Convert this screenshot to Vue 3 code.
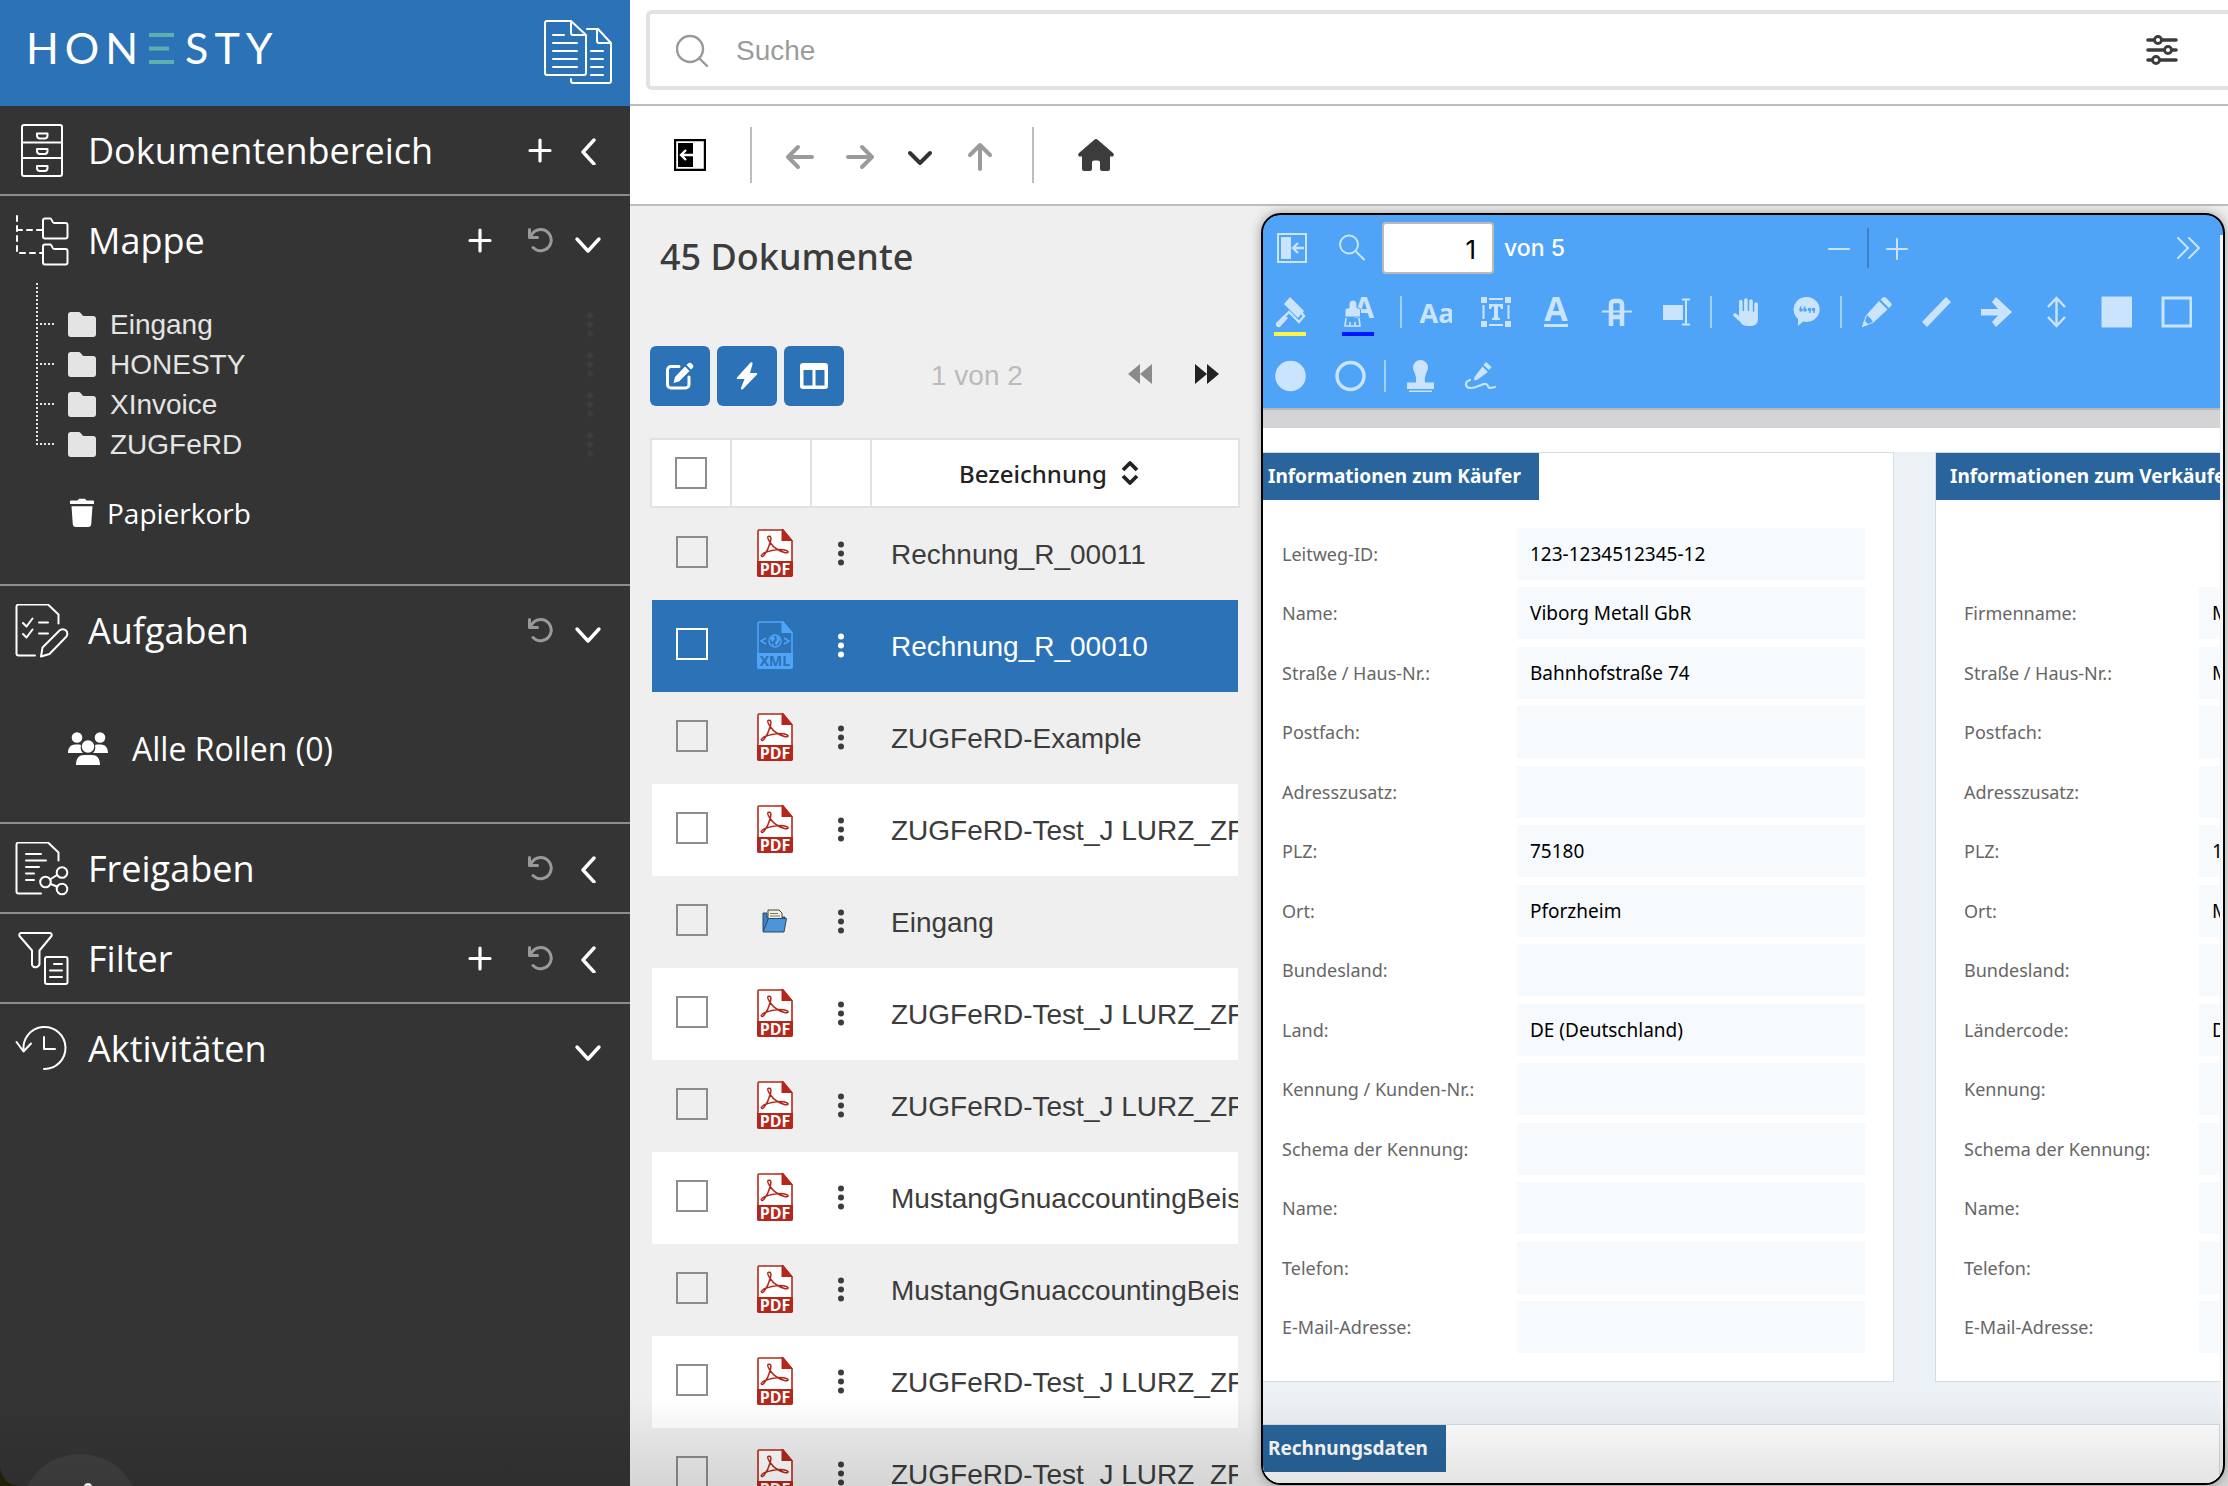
<script setup>
import { ref } from 'vue'

const folders = ['Eingang', 'HONESTY', 'XInvoice', 'ZUGFeRD']

const documents = ref([
  { name: 'Rechnung_R_00011', type: 'pdf' },
  { name: 'Rechnung_R_00010', type: 'xml', selected: true },
  { name: 'ZUGFeRD-Example', type: 'pdf' },
  { name: 'ZUGFeRD-Test_J LURZ_ZF', type: 'pdf' },
  { name: 'Eingang', type: 'folder' },
  { name: 'ZUGFeRD-Test_J LURZ_ZF', type: 'pdf' },
  { name: 'ZUGFeRD-Test_J LURZ_ZF', type: 'pdf' },
  { name: 'MustangGnuaccountingBeispiel', type: 'pdf' },
  { name: 'MustangGnuaccountingBeispiel', type: 'pdf' },
  { name: 'ZUGFeRD-Test_J LURZ_ZF', type: 'pdf' },
  { name: 'ZUGFeRD-Test_J LURZ_ZF', type: 'pdf' },
])

const buyer = [
  ['Leitweg-ID:', '123-1234512345-12'],
  ['Name:', 'Viborg Metall GbR'],
  ['Straße / Haus-Nr.:', 'Bahnhofstraße 74'],
  ['Postfach:', ''],
  ['Adresszusatz:', ''],
  ['PLZ:', '75180'],
  ['Ort:', 'Pforzheim'],
  ['Bundesland:', ''],
  ['Land:', 'DE (Deutschland)'],
  ['Kennung / Kunden-Nr.:', ''],
  ['Schema der Kennung:', ''],
  ['Name:', ''],
  ['Telefon:', ''],
  ['E-Mail-Adresse:', ''],
]

const seller = [
  ['Firmenname:', 'M'],
  ['Straße / Haus-Nr.:', 'M'],
  ['Postfach:', ''],
  ['Adresszusatz:', ''],
  ['PLZ:', '1'],
  ['Ort:', 'M'],
  ['Bundesland:', ''],
  ['Ländercode:', 'D'],
  ['Kennung:', ''],
  ['Schema der Kennung:', ''],
  ['Name:', ''],
  ['Telefon:', ''],
  ['E-Mail-Adresse:', ''],
]

const page = ref('1')
const query = ref('')
</script>

<template>
  <div class="app">
    <svg class="defs" width="0" height="0" aria-hidden="true">
      <symbol id="i-plus" viewBox="0 0 28 28"><path d="M14 3v21M4 13.500h20" fill="none" stroke="currentColor" stroke-width="3.2" stroke-linecap="round" /></symbol>
      <symbol id="i-left" viewBox="0 0 28 28"><path d="M20 3 9 15 20 27" fill="none" stroke="currentColor" stroke-width="3.400" stroke-linecap="round" stroke-linejoin="round" /></symbol>
      <symbol id="i-down" viewBox="0 0 28 28"><path d="M3 12l11 12 11-12" fill="none" stroke="currentColor" stroke-width="3.400" stroke-linecap="round" stroke-linejoin="round" /></symbol>
      <symbol id="i-undo" viewBox="0 0 28 28"><path d="M3.500 2.500v8h8M4.500 9.500C6.500 5.500 10 2.500 14.500 2.500a10.600 10.600 0 1 1-7.500 18" fill="none" stroke="currentColor" stroke-width="3" stroke-linecap="round" stroke-linejoin="round" /></symbol>
      <symbol id="i-dots" viewBox="0 0 8 28"><circle cx="4" cy="4.500" r="3" /><circle cx="4" cy="13.500" r="3" /><circle cx="4" cy="22.500" r="3" /></symbol>
      <symbol id="i-folder" viewBox="0 0 28 26"><path d="M3 0h8c2 0 3 4 5 4h9a3 3 0 0 1 3 3v15a3 3 0 0 1-3 3H3a3 3 0 0 1-3-3V3a3 3 0 0 1 3-3z" fill="currentColor" /></symbol>
    </svg>

    <aside class="sidebar">
      <header class="brand">
        <div class="logo" aria-label="HONESTY">
          <span>H</span><span>O</span><span>N</span>
          <svg class="logo-bars" width="25" height="31" viewBox="0 0 25 31"><path d="M0 0h25v4H0zM0 13.500h20v4H0zM0 27h25v4H0z" fill="#5cb0ae" /></svg>
          <span>S</span><span>T</span><span>Y</span>
        </div>
        <svg width="68" height="64" viewBox="0 0 68 64" fill="none" stroke="#fff" stroke-width="2" stroke-linecap="round" stroke-linejoin="round">
          <path d="M27 1H3a2 2 0 0 0-2 2v50a2 2 0 0 0 2 2h37a2 2 0 0 0 2-2V15zM27 1v12a2 2 0 0 0 2 2h13M9 15h11M9 23h24M9 31h24M9 39h24M9 47h24" />
          <path d="M43 9h11l13 14v38a2 2 0 0 1-2 2H29a2 2 0 0 1-2-2v-2M53 9v12a2 2 0 0 0 2 2h12M47 31h12M47 39h12M47 47h12M47 55h12" />
        </svg>
      </header>

      <nav>
        <section>
          <div class="head">
            <svg class="sec" viewBox="0 0 54 54">
              <rect x="7" y="1" width="40" height="51" rx="2" />
              <path d="M7 18.500h40M7 34h40M22 9.500h10.500v2a3 3 0 0 1-3 3h-5a3 3 0 0 1-2.500-3zM22 25h10.500v2a3 3 0 0 1-3 3h-5a3 3 0 0 1-2.500-3zM22 42h10.500v2a3 3 0 0 1-3 3h-5a3 3 0 0 1-2.500-3z" />
            </svg>
            <h2>Dokumentenbereich</h2>
            <button class="ico" aria-label="Hinzufügen"><svg><use href="#i-plus" /></svg></button>
            <button class="ico" aria-label="Aufklappen"><svg><use href="#i-left" /></svg></button>
          </div>
        </section>

        <section class="mappe">
          <div class="head">
            <svg class="sec" viewBox="0 0 54 54">
              <path d="M2 2v37h25M2 16h25" stroke-dasharray="5 5" />
              <path d="M30 4.500h5.500c1.500 0 1.500 4.500 3.500 4.500h11.500a2 2 0 0 1 2 2v11.500a2 2 0 0 1-2 2H30a2 2 0 0 1-2-2v-16a2 2 0 0 1 2-2zM30 30.500h5.500c1.500 0 1.500 4.500 3.500 4.500h11.500a2 2 0 0 1 2 2v11.500a2 2 0 0 1-2 2H30a2 2 0 0 1-2-2v-16a2 2 0 0 1 2-2z" />
            </svg>
            <h2>Mappe</h2>
            <button class="ico" aria-label="Hinzufügen"><svg><use href="#i-plus" /></svg></button>
            <button class="ico dim" aria-label="Neu laden"><svg><use href="#i-undo" /></svg></button>
            <button class="ico" aria-label="Zuklappen"><svg><use href="#i-down" /></svg></button>
          </div>
          <ul class="tree">
            <li v-for="f in folders" :key="f">
              <svg class="folder" width="28" height="26"><use href="#i-folder" /></svg>
              <a href="#">{{ f }}</a>
              <svg class="ghost" width="8" height="28"><use href="#i-dots" /></svg>
            </li>
          </ul>
          <a class="trash" href="#">
            <svg width="26" height="30" viewBox="0 0 26 30" fill="#fff"><path d="M2 2.500h6.500L10 .8h6l1.500 1.700H24a1 1 0 0 1 1 1V6H1V3.500a1 1 0 0 1 1-1zM2.500 8.300h21l-1.300 18.200a3 3 0 0 1-3 2.500H6.800a3 3 0 0 1-3-2.500z" /></svg>
            <span>Papierkorb</span>
          </a>
        </section>

        <section class="tasks">
          <div class="head">
            <svg class="sec" viewBox="0 0 54 54">
              <path d="M20 51.500H3.500a2 2 0 0 1-2-2v-47a2 2 0 0 1 2-2h29.500l10.500 10v9M8 19l3.500 3.500 6-8M8 30l3.500 3.500 6-8M24 18.500h9M24 29.500h9" />
              <path d="M26 52.500l1.500-9 17-17a4.300 4.300 0 0 1 6.500 6.500l-16.500 17z" />
            </svg>
            <h2>Aufgaben</h2>
            <button class="ico dim" aria-label="Neu laden"><svg><use href="#i-undo" /></svg></button>
            <button class="ico" aria-label="Zuklappen"><svg><use href="#i-down" /></svg></button>
          </div>
          <a class="roles" href="#">
            <svg width="40" height="34" viewBox="0 0 40 34" fill="#fff"><circle cx="9" cy="5.500" r="5.300" /><circle cx="32" cy="5.500" r="5.300" /><circle cx="20" cy="14.500" r="6.200" /><path d="M0 21c0-5 2.500-8.500 7-8.500h4c.8 0 1.500.2 2 .5-.8 3.500.2 6.500 2 8zM40 21c0-5-2.500-8.500-7-8.500h-4c-.8 0-1.500.2-2 .5.800 3.500-.2 6.500-2 8zM8 33c0-6.500 3-10 8-10h8c5 0 8 3.500 8 10z" /></svg>
            <span>Alle Rollen (0)</span>
          </a>
        </section>

        <section>
          <div class="head">
            <svg class="sec" viewBox="0 0 54 54">
              <path d="M26 51.500H3.500a2 2 0 0 1-2-2v-47a2 2 0 0 1 2-2h29.500l10.500 10v8M11 12h15M11 18.500h20M11 25h13M11 31.500h8M11 38h8M35 37.500l7-4.500M35.500 42l6.500 2.500" />
              <circle cx="30.500" cy="40" r="5.300" /><circle cx="47" cy="30.500" r="5.300" /><circle cx="47" cy="47" r="5.300" />
            </svg>
            <h2>Freigaben</h2>
            <button class="ico dim" aria-label="Neu laden"><svg><use href="#i-undo" /></svg></button>
            <button class="ico" aria-label="Aufklappen"><svg><use href="#i-left" /></svg></button>
          </div>
        </section>

        <section>
          <div class="head">
            <svg class="sec" viewBox="0 0 54 54">
              <path d="M6 1h29a2 2 0 0 1 1.500 3L24.500 18.500v12a4 4 0 0 1-7.500 2.500V18.500L4.500 4A2 2 0 0 1 6 1z" />
              <rect x="30" y="25" width="22.500" height="27" rx="2" />
              <path d="M39 32h8M35 38.500h12M35 45h12" />
            </svg>
            <h2>Filter</h2>
            <button class="ico" aria-label="Hinzufügen"><svg><use href="#i-plus" /></svg></button>
            <button class="ico dim" aria-label="Neu laden"><svg><use href="#i-undo" /></svg></button>
            <button class="ico" aria-label="Aufklappen"><svg><use href="#i-left" /></svg></button>
          </div>
        </section>

        <section class="last">
          <div class="head">
            <svg class="sec" viewBox="0 0 54 54">
              <path d="M8.700 29A21 21 0 1 1 29 47M1.500 20l7 9.500 7.500-8M29 15v12h11" />
            </svg>
            <h2>Aktivitäten</h2>
            <button class="ico" aria-label="Zuklappen"><svg><use href="#i-down" /></svg></button>
          </div>
        </section>
      </nav>
      <div class="bubble"></div>
    </aside>

    <main class="main">
      <div class="searchbar">
        <label class="search">
          <svg width="34" height="34" viewBox="0 0 34 34" fill="none" stroke="#999" stroke-width="2.400" stroke-linecap="round"><circle cx="14" cy="16" r="13" /><path d="M23.500 25.500l7.500 7.500" /></svg>
          <input v-model="query" type="text" placeholder="Suche" aria-label="Suche" />
          <svg width="32" height="30" viewBox="0 0 32 30" fill="#fff" stroke="#3c3c3c" stroke-width="3.600" stroke-linecap="round"><path d="M2 5h28M2 15h28M2 25h28" /><g stroke-width="2.800"><circle cx="12" cy="5" r="3.500" /><circle cx="22" cy="15" r="3.500" /><circle cx="10" cy="25" r="3.500" /></g></svg>
        </label>
      </div>

      <div class="toolbar">
        <button class="tb wide" aria-label="Seitenleiste">
          <svg width="32" height="32" viewBox="0 0 32 32"><path d="M1 1h30v30H1z" fill="#fff" stroke="#000" stroke-width="2.400" /><path d="M4 4h15v24H4z" /><path d="M12 11l-5 5 5 5M7 16h12" fill="none" stroke="#fff" stroke-width="2.400" /></svg>
        </button>
        <span class="vr"></span>
        <div class="arrows">
          <button class="tb" aria-label="Zurück"><svg width="32" height="32" viewBox="0 0 32 32" class="arrow"><path d="M28 18H4M14 8 4 18l10 10" /></svg></button>
          <button class="tb" aria-label="Vorwärts"><svg width="32" height="32" viewBox="0 0 32 32" class="arrow"><path d="M4 18h24M18 8l10 10-10 10" /></svg></button>
          <button class="tb" aria-label="Verlauf"><svg width="32" height="32" viewBox="0 0 32 32" class="arrow dark"><path d="M6 14l10 10 10-10" /></svg></button>
          <button class="tb" aria-label="Nach oben"><svg width="32" height="32" viewBox="0 0 32 32" class="arrow"><path d="M16 30V6M6 16 16 6l10 10" /></svg></button>
        </div>
        <span class="vr"></span>
        <button class="tb home" aria-label="Startseite">
          <svg width="36" height="32" viewBox="0 0 36 32" fill="#3c3c3c"><path d="M16 1a3 3 0 0 1 4 0l15 13c1.500 1.300.8 3.500-1 3.500h-2V30a2 2 0 0 1-2 2h-6a2 2 0 0 1-2-2v-6.500a2 2 0 0 0-2-2h-4a2 2 0 0 0-2 2V30a2 2 0 0 1-2 2H6a2 2 0 0 1-2-2V17.500H2c-1.800 0-2.500-2.200-1-3.500z" /></svg>
        </button>
      </div>

      <div class="content">
        <section class="list">
          <h1>45 Dokumente</h1>
          <div class="actions">
            <button class="act" aria-label="Bearbeiten"><svg width="28" height="28" viewBox="0 0 28 28"><path d="M13 4.500H5A3.500 3.500 0 0 0 1.500 8v14.500A3.500 3.500 0 0 0 5 26h14.500a3.500 3.500 0 0 0 3.500-3.500V15" fill="none" stroke="#fff" stroke-width="3" stroke-linecap="round" /><path d="M19 4.500l4.500 4.500L13 19.500 7.500 21 9 15zM20.500 3 22 1.500a2.500 2.500 0 0 1 3.500 0l1 1a2.500 2.500 0 0 1 0 3.500L25 7.500z" fill="#fff" /></svg></button>
            <button class="act" aria-label="Aktionen"><svg width="28" height="28" viewBox="0 0 28 28"><path d="M17.500.5 4 15.500c-.6 1 0 1.500 1 1.500h6.500L8 26c-.3 1.500 1 2 2 1L24 12.500c.7-1 0-1.500-1-1.500h-6L19.500 2c.3-1.500-1-2.300-2-1.500z" fill="#fff" /></svg></button>
            <button class="act" aria-label="Spalten"><svg width="28" height="26" viewBox="0 0 28 26"><path d="M3 0h22a3 3 0 0 1 3 3v20a3 3 0 0 1-3 3H3a3 3 0 0 1-3-3V3a3 3 0 0 1 3-3zm.5 7v15.500h9V7zm12 0v15.500h9V7z" fill="#fff" fill-rule="evenodd" /></svg></button>
            <span class="pages">1 von 2</span>
            <button class="pg off" aria-label="Zurück"><svg width="24" height="20" viewBox="0 0 24 20"><path d="M12 0v20L0 10zM24 0v20L12 10z" fill="currentColor" /></svg></button>
            <button class="pg" aria-label="Weiter"><svg width="24" height="20" viewBox="0 0 24 20"><path d="M0 0v20l12-10zM12 0v20l12-10z" fill="currentColor" /></svg></button>
          </div>
          <table>
            <colgroup><col class="c1" /><col class="c2" /><col class="c3" /><col /></colgroup>
            <thead>
              <tr>
                <th><input type="checkbox" aria-label="Alle auswählen" /></th>
                <th></th>
                <th></th>
                <th class="name">
                  <div>Bezeichnung<svg width="18" height="28" viewBox="0 0 18 28" fill="none" stroke="#222" stroke-width="3.800" stroke-linejoin="round"><path d="M2 10l7-7 7 7M2 16l7 7 7-7" /></svg></div>
                </th>
              </tr>
            </thead>
            <tbody>
              <tr v-for="(d, i) in documents" :key="i" :class="{ selected: d.selected }">
                <td><input type="checkbox" :aria-label="d.name" /></td>
                <td class="kind">
                  <svg v-if="d.type === 'folder'" width="26" height="24" viewBox="0 0 26 24">
                    <path d="M1 4h4v4h18v2l-2 12H1z" fill="#3f7fc4" stroke="#2b4a6b" />
                    <path d="M6 12V1h11l3 3v8z" fill="#f3f0dc" stroke="#444" />
                    <path d="M8 4.500h8M8 7h10" stroke="#777" />
                    <path d="M1 23 6.500 9.500h18L22 23z" fill="#4d94d8" stroke="#2b4a6b" />
                  </svg>
                  <svg v-else-if="d.type === 'xml'" width="36" height="48" viewBox="0 0 36 48">
                    <path d="M2 1h24l9 11v34H1V2z" fill="none" stroke="#4fa4f8" stroke-width="1.600" />
                    <path d="M24.500 0H26l10 12H24.500zM0 32h36v14a2 2 0 0 1-2 2H2a2 2 0 0 1-2-2z" fill="#4fa4f8" />
                    <circle cx="18" cy="20" r="6" fill="none" stroke="#4fa4f8" stroke-width="1.400" />
                    <path d="M13 17l4-2 1 3-3 3zM19 15l4 2-1 4-3 4-1-4 2-2zM14 22l3 1v2z" fill="#4fa4f8" />
                    <path d="M9 17l-5 3 5 3M27 17l5 3-5 3" fill="none" stroke="#4fa4f8" stroke-width="1.500" />
                    <text x="18" y="45" text-anchor="middle" class="g14" fill="#2c72b7">XML</text>
                  </svg>
                  <svg v-else width="36" height="48" viewBox="0 0 36 48">
                    <path d="M2 1h24l9 11v34a1 1 0 0 1-1 1H2a1 1 0 0 1-1-1V2a1 1 0 0 1 1-1z" fill="#fff" stroke="#b5271b" stroke-width="1.600" />
                    <path d="M24.500 0H26l10 12H24.500zM0 32h36v14a2 2 0 0 1-2 2H2a2 2 0 0 1-2-2z" fill="#b5271b" />
                    <path d="M11 7.500c3-1.500 3.500 2 2.200 6-1.200 4.500-3.700 9.500-6 12.500-1.500 2.200-3.500 1.800-2.700 0 1-2 6-3.500 11.500-4.700 4.500-.9 11-.8 14.500.7 1.500 1-.2 2.200-2.300 1.700-5-1.300-11.500-5-14.700-9.700-2-3-3.500-5.500-2.500-6.500z" fill="none" stroke="#b5271b" stroke-width="1.500" />
                    <text x="18" y="46" text-anchor="middle" class="g16" fill="#fff">PDF</text>
                  </svg>
                </td>
                <td><svg class="dots" width="8" height="28"><use href="#i-dots" /></svg></td>
                <td class="name">{{ d.name }}</td>
              </tr>
            </tbody>
          </table>
        </section>

        <section class="viewer">
          <div class="pdfbar">
            <div class="prow first">
              <button class="pi" aria-label="Seitenleiste"><svg viewBox="0 0 32 32"><path d="M2 2h28v28H2z" fill="none" stroke="currentColor" stroke-width="2" /><path d="M5 5h10v22H5z" /><path d="M28 16H18M22 11l-5 5 5 5" fill="none" stroke="currentColor" stroke-width="2.400" /></svg></button>
              <button class="pi" aria-label="Suchen"><svg viewBox="0 0 32 32" class="line"><circle cx="13" cy="12.500" r="9" /><path d="M19.500 19l8.500 8.500" /></svg></button>
              <input v-model="page" class="pageno" type="text" aria-label="Seite" />
              <span class="of">von 5</span>
              <span class="zoomgroup">
                <button class="pi" aria-label="Verkleinern"><svg viewBox="0 0 32 32" class="line"><path d="M6 17h20" /></svg></button>
                <span class="zr"></span>
                <button class="pi" aria-label="Vergrößern"><svg viewBox="0 0 32 32" class="line"><path d="M6 17h20M16 7v20" /></svg></button>
              </span>
              <button class="pi more" aria-label="Mehr"><svg viewBox="0 0 32 32" class="line"><path d="M6 6l10 10L6 26M17 6l10 10-10 10" /></svg></button>
            </div>
            <div class="prow">
              <div class="colors">
                <button class="pi yellow" aria-label="Markieren"><svg viewBox="0 0 32 32"><path d="M16 1l14 14-6 7L10 8z" /><path d="M2 27l8-8 4 3-8 9c-2 1-5-1-4-4z" /><path d="M11 20l4-4 10 10 5-6-3-4" fill="none" stroke="currentColor" stroke-width="2.400" /></svg></button>
                <button class="pi blue" aria-label="Text markieren"><svg viewBox="0 0 32 32"><text x="32" y="22" text-anchor="end" class="g29">A</text><path d="M7 8a4 4 0 0 1 8 0v4h1.500a2 2 0 0 1 2 2v7H3v-7a2 2 0 0 1 2-2h2z" stroke="#4fa4f8" /><path d="M4 22l-1 8h15l-1-8M8 26v4M13 26v4" fill="none" stroke="currentColor" stroke-width="1.600" /></svg></button>
              </div>
              <span class="pv"></span>
              <div class="icons">
                <button class="pi" aria-label="Freitext"><svg viewBox="0 0 32 32"><text x="17" y="27" text-anchor="middle" class="g27">Aa</text></svg></button>
                <button class="pi" aria-label="Textfeld"><svg viewBox="0 0 32 32"><path d="M1 1h6v6H1zM25 1h6v6h-6zM1 25h6v6H1zM25 25h6v6h-6z" /><path d="M9 3h14M9 29h14M3.500 9v14M28.500 9v14" stroke="currentColor" stroke-width="2" /><path d="M9 8h14v5h-2l-1-2.500h-2v11l2 .5v2h-8v-2l2-.5v-11h-2L11 13H9z" /></svg></button>
                <button class="pi" aria-label="Unterstreichen"><svg viewBox="0 0 32 32"><text x="16" y="25" text-anchor="middle" class="g34">A</text><path d="M4 28h24v3H4z" /></svg></button>
                <button class="pi" aria-label="Durchstreichen"><svg viewBox="0 0 32 32" fill="none"><path d="M11 30V8a3 3 0 0 1 3-3h5a3 3 0 0 1 3 3v22M11 21h11" fill="none" stroke="currentColor" stroke-width="4.500" /><path d="M2 15.500h30" stroke="currentColor" stroke-width="2" /></svg></button>
                <button class="pi" aria-label="Ersetzen"><svg viewBox="0 0 32 32"><path d="M3 9h20v15H3z" /><path d="M26 4v24M22 3.500h8M22 28.500h8" stroke="currentColor" stroke-width="2" /></svg></button>
              </div>
              <span class="pv"></span>
              <div class="icons">
                <button class="pi" aria-label="Hand"><svg viewBox="0 0 32 32"><path d="M9 5.500a1.800 1.800 0 0 1 3.600 0V15h1.500V4a1.800 1.800 0 0 1 3.600 0v11h1.500V5a1.800 1.800 0 0 1 3.600 0v10.500h1.500V8a1.800 1.800 0 0 1 3.600 0v15c0 5-3 7-7 7h-3c-4 0-6-1.500-8-4.500L3.500 20c-1-2 .8-3.500 2.500-2.500l3 2.500z" /></svg></button>
                <button class="pi" aria-label="Kommentar"><svg viewBox="0 0 32 32"><path d="M17 1a13 12.500 0 1 1-4 24.500L8 30v-7A12.500 12.500 0 0 1 17 1z" /><g fill="#4fa4f8"><circle cx="11" cy="14" r="1.800" /><circle cx="15" cy="14" r="1.800" /><circle cx="19.500" cy="13.500" r="1.800" /><circle cx="23.500" cy="13.500" r="1.800" /></g><path d="M10 13l1-2.500M14 13l1-2.500M20.500 14.500l-1 2.500M24.500 14.500l-1 2.500" stroke="#4fa4f8" stroke-width="1.400" /></svg></button>
              </div>
              <span class="pv"></span>
              <div class="icons">
                <button class="pi" aria-label="Stift"><svg viewBox="0 0 32 32"><path d="M20.500 3.500 23 1.500c1-.8 2-.6 3 .3l5 5.200c.8 1 .8 2 0 3l-2 2zM19 5l8.500 8.500L13 27 2 31l3.500-11z" /><path d="M7 19l-2 6 3 3 5-2-2-3z" fill="#4fa4f8" /><path d="M2 31l2-6 4 4z" /></svg></button>
                <button class="pi" aria-label="Linie"><svg viewBox="0 0 32 32"><path d="M26 1l5 5L7 31l-5-5z" /></svg></button>
                <button class="pi" aria-label="Pfeil"><svg viewBox="0 0 32 32"><path d="M1 13h17l-6-7 4-5 16 15-16 15-4-5 6-6.500H1z" /></svg></button>
                <button class="pi" aria-label="Maß"><svg viewBox="0 0 32 32"><path d="M16.500 2v28M8 11l8.500-9 8.500 9M8 21l8.500 9 8.500-9" fill="none" stroke="currentColor" stroke-width="2.400" /></svg></button>
                <button class="pi" aria-label="Gefülltes Rechteck"><svg viewBox="0 0 32 32"><path d="M1.500.5h31v31h-31z" /></svg></button>
                <button class="pi" aria-label="Rechteck"><svg viewBox="0 0 32 32"><path d="M3 2h28v28H3z" fill="none" stroke="currentColor" stroke-width="3" /></svg></button>
              </div>
            </div>
            <div class="prow">
              <div class="icons">
                <button class="pi" aria-label="Gefüllter Kreis"><svg viewBox="0 0 32 32"><circle cx="16.500" cy="16" r="15.300" /></svg></button>
                <button class="pi" aria-label="Kreis"><svg viewBox="0 0 32 32"><circle cx="16.500" cy="16" r="13.500" fill="none" stroke="currentColor" stroke-width="3.400" /></svg></button>
              </div>
              <span class="pv"></span>
              <div class="icons">
                <button class="pi" aria-label="Stempel"><svg viewBox="0 0 32 32"><path d="M9 7.500a7.500 7.500 0 0 1 15 0c0 4-4 7-3 15h9v6.500H3V22.500h9c1-8-3-11-3-15zM5 30.500h23V32H5z" /></svg></button>
                <button class="pi" aria-label="Signatur"><svg viewBox="0 0 32 32"><path d="M22 2l5.500 5-2.500 3-5.500-5zM18.500 6.500 24 12 13 20l-3 .5.500-3.500z" /><path d="M6 20c-6 2-5 8 1 8s11-5 15-4-1 6 9 3" fill="none" stroke="currentColor" stroke-width="2.200" stroke-linecap="round" /></svg></button>
              </div>
            </div>
          </div>
          <div class="band"></div>
          <div class="doc">
            <div class="cards">
              <article class="card">
                <h3>Informationen zum Käufer</h3>
                <dl>
                  <template v-for="(r, i) in buyer" :key="i"><dt>{{ r[0] }}</dt><dd>{{ r[1] }}</dd></template>
                </dl>
              </article>
              <article class="card">
                <h3>Informationen zum Verkäufer</h3>
                <dl class="offset">
                  <template v-for="(r, i) in seller" :key="i"><dt>{{ r[0] }}</dt><dd>{{ r[1] }}</dd></template>
                </dl>
              </article>
            </div>
            <article class="card full"><h3>Rechnungsdaten</h3></article>
          </div>
        </section>
      </div>
    </main>
    <div class="fade"></div>
  </div>
</template>

<style>
body {
  background: #25240c;
}
</style>

<style scoped>
* {
  box-sizing: border-box;
  margin: 0;
}
.app {
  position: relative;
  display: flex;
  height: 100vh;
  overflow: hidden;
  font-family: "Noto Sans", sans-serif;
  color: #3c3c3c;
}
.defs {
  position: absolute;
}
button {
  display: flex;
  align-items: center;
  justify-content: center;
  padding: 0;
  border: 0;
  background: none;
  color: inherit;
  flex: none;
}
a {
  color: inherit;
  text-decoration: none;
}
svg {
  display: block;
  flex: none;
}

/* Sidebar */
.sidebar {
  position: relative;
  width: 630px;
  flex: none;
  overflow: hidden;
  background: #343434;
  color: #fff;
  font-family: "Open Sans", sans-serif;
  border-bottom-left-radius: 20px;
}
.brand {
  display: flex;
  justify-content: space-between;
  align-items: flex-start;
  height: 106px;
  padding: 20px 18px 0 26px;
  background: #2c72b7;
}
.logo {
  display: flex;
  align-items: center;
  gap: 6px;
  height: 56px;
  font-family: Lato, sans-serif;
  font-size: 43px;
  line-height: 56px;
}
.logo-bars {
  margin: 0 5px;
}
section {
  border-bottom: 2px solid #8d8d8d;
}
.head {
  display: flex;
  align-items: center;
  height: 88px;
  padding: 2px 18px 0 15px;
}
.sec {
  width: 54px;
  height: 54px;
  margin-right: 19px;
  fill: none;
  stroke: #fff;
  stroke-width: 2;
  stroke-linecap: round;
  stroke-linejoin: round;
}
h2 {
  flex: 1;
  font-size: 36px;
  line-height: 86px;
  font-weight: 400;
}
.ico {
  width: 48px;
  height: 48px;
}
.ico:nth-last-child(3) {
  margin-right: 12px;
}
.ico svg {
  width: 28px;
  height: 28px;
}
.dim {
  color: #999;
}
.mappe {
  height: 390px;
}
.tree {
  list-style: none;
  padding: 21px 36px 28px;
  font-family: "Liberation Sans", Arial, sans-serif;
  font-size: 28px;
  line-height: 40px;
  color: #e4e4e4;
}
.tree li {
  position: relative;
  display: flex;
  align-items: center;
  height: 40px;
  padding-left: 32px;
}
.tree li::before {
  content: "";
  position: absolute;
  left: 0;
  bottom: 20px;
  width: 16px;
  height: 40px;
  border-left: 2px dotted #e4e4e4;
  border-bottom: 2px dotted #e4e4e4;
}
.tree a {
  flex: 1;
  margin-left: 14px;
}
.ghost {
  fill: #3d3d3d;
}
.trash {
  display: flex;
  align-items: center;
  height: 40px;
  padding-left: 69px;
  gap: 12px;
  font-size: 28px;
  line-height: 40px;
}
.tasks {
  height: 238px;
}
.roles {
  display: flex;
  align-items: center;
  gap: 24px;
  height: 48px;
  margin-top: 51px;
  padding-left: 68px;
  font-size: 32px;
  line-height: 48px;
}
.last {
  border: 0;
}
.bubble {
  position: absolute;
  left: 20px;
  bottom: -88px;
  width: 120px;
  height: 120px;
  border-radius: 60px;
  background: #404040;
}
.bubble::before {
  content: "";
  position: absolute;
  left: 64px;
  top: 29px;
  width: 8px;
  height: 8px;
  border-radius: 4px;
  background: #fff;
}

/* Main column */
.main {
  flex: 1;
  min-width: 0;
  display: flex;
  flex-direction: column;
  background: #fff;
}
.searchbar {
  height: 106px;
  padding: 10px 0 0 16px;
  border-bottom: 2px solid #bdbdbd;
}
.search {
  display: flex;
  align-items: center;
  height: 80px;
  padding: 0 50px 0 26px;
  border: 4px solid #e2e2e2;
  border-right: 0;
  border-radius: 6px 0 0 6px;
}
.search input {
  flex: 1;
  margin-left: 26px;
  padding: 2px 0 0;
  border: 0;
  outline: 0;
  font: 28px/40px "Liberation Sans", Arial, sans-serif;
}
.search input::placeholder {
  color: #9b9b9b;
}
.toolbar {
  display: flex;
  align-items: center;
  height: 100px;
  padding-left: 44px;
  border-bottom: 2px solid #bdbdbd;
}
.tb {
  width: 32px;
  height: 56px;
}
.vr {
  width: 2px;
  height: 56px;
  background: #bdbdbd;
}
.wide {
  margin-right: 44px;
}
.arrows {
  display: flex;
  gap: 28px;
  margin: 0 36px 0 32px;
}
.home {
  width: 36px;
  margin-left: 44px;
}
.arrow {
  fill: none;
  stroke: #9b9b9b;
  stroke-width: 4;
  stroke-linecap: round;
  stroke-linejoin: round;
}
.dark {
  stroke: #333;
}
.content {
  flex: 1;
  min-height: 0;
  display: flex;
  background: #efefef;
}

/* Document list */
.list {
  width: 631px;
  flex: none;
  overflow: hidden;
  padding: 26px 21px 0 20px;
  border: 0;
}
h1 {
  padding-left: 10px;
  font-size: 36px;
  line-height: 50px;
  font-weight: 500;
}
.actions {
  display: flex;
  align-items: center;
  gap: 7px;
  height: 60px;
  margin: 64px 0 32px;
  padding-right: 3px;
}
.act {
  width: 60px;
  height: 60px;
  border-radius: 6px;
  background: #2c72b7;
}
.pages {
  flex: 1;
  padding-left: 80px;
  font: 28px/40px "Liberation Sans", Arial, sans-serif;
  color: #bbb;
}
.pg {
  width: 60px;
  height: 56px;
  padding-bottom: 4px;
  color: #222;
}
.off {
  color: #8a8a8a;
}
table {
  width: 100%;
  table-layout: fixed;
  border-collapse: separate;
  border-spacing: 0;
}
.c1,
.c2 {
  width: 80px;
}
.c3 {
  width: 60px;
}
th {
  height: 70px;
  padding: 0;
  border: 2px solid #e2e2e2;
  border-right: 0;
  background: #fff;
}
th:last-child {
  border-right: 2px solid #e2e2e2;
}
th div {
  display: flex;
  align-items: center;
  justify-content: center;
  gap: 14px;
  padding: 2px 12px 0 0;
  font-size: 24px;
  line-height: 36px;
  font-weight: 500;
  color: #222;
}
td {
  height: 92px;
  padding: 0;
  background-clip: padding-box;
}
td:first-child {
  padding: 0 0 4px 2px;
  border-left: 2px solid transparent;
}
td:last-child {
  border-right: 2px solid transparent;
}
td > svg {
  margin: 0 auto;
}
td.kind {
  padding: 0 0 2px 10px;
}
td:nth-child(3) {
  padding-left: 2px;
}
tbody tr:nth-child(even) td {
  background-color: #fff;
}
td.name {
  padding: 2px 0 0 21px;
  overflow: hidden;
  white-space: nowrap;
  font: 28px/40px "Liberation Sans", Arial, sans-serif;
}
tbody tr.selected td {
  background-color: #2c72b7;
  color: #fff;
}
.dots {
  fill: currentColor;
}
table input {
  appearance: none;
  display: block;
  width: 32px;
  height: 32px;
  margin: 0 auto;
  border: 2px solid #8d8d8d;
}
.selected input {
  border-color: #fff;
}

/* Viewer */
.viewer {
  flex: 1;
  min-width: 0;
  display: flex;
  flex-direction: column;
  margin: 7px 3px 1px 0;
  padding: 1px 3px 0 0;
  border: 2px solid #000;
  border-radius: 20px;
  overflow: hidden;
  background: linear-gradient(#4fa4f8 20px, #f5f5f5 20px);
  box-shadow: 0 0 12px rgba(0, 0, 0, 0.35);
}
.pdfbar {
  flex: none;
  padding-left: 11px;
  background: #4fa4f8;
  border-bottom: 2px solid #b8b8b8;
  color: #cbe4fd;
}
.prow {
  display: flex;
  align-items: center;
  height: 64px;
}
.prow.first {
  padding-left: 2px;
}
.pi {
  width: 32px;
  height: 32px;
}
.pi svg {
  width: 32px;
  height: 32px;
  fill: currentColor;
}
.pi svg.line {
  fill: none;
  stroke: currentColor;
  stroke-width: 2;
  stroke-linecap: round;
}
.first .pi + .pi {
  margin-left: 28px;
}
.pageno {
  width: 112px;
  height: 52px;
  margin-left: 14px;
  padding: 2px 16px 0;
  border: 2px solid #bbb;
  border-radius: 4px;
  background: #fff;
  text-align: right;
  font: 26px/40px Inter, sans-serif;
  color: #000;
}
.of {
  margin-left: 10px;
  font: 500 23px/36px Inter, sans-serif;
  color: #fff;
}
.zoomgroup {
  display: flex;
  align-items: center;
  gap: 12px;
  margin: 0 auto;
}
.zr {
  width: 2px;
  height: 40px;
  background: #3d7fc9;
}
.more {
  margin-right: 16px;
}
.colors {
  display: flex;
  gap: 36px;
  padding-right: 8px;
}
.icons {
  display: flex;
  gap: 28px;
}
.pv {
  width: 2px;
  height: 32px;
  margin: 0 18px;
  background: #a5d0fb;
}
.yellow,
.blue {
  position: relative;
}
.yellow::after,
.blue::after {
  content: "";
  position: absolute;
  left: 0;
  top: 36px;
  width: 32px;
  height: 4px;
  background: #fdf54a;
}
.blue::after {
  background: #0018ff;
}
.g14,
.g16,
.g27,
.g29,
.g34 {
  font-family: "Open Sans", sans-serif;
  font-weight: 700;
  font-size: 14px;
}
.g16 {
  font-size: 16px;
}
.g27 {
  font-size: 27px;
}
.g29 {
  font-size: 29px;
}
.g34 {
  font-size: 34px;
}
.band {
  flex: none;
  height: 18px;
  background: #d4d4d6;
}
.doc {
  flex: 1;
  min-height: 0;
  overflow: hidden;
  padding-top: 24px;
  background: #fff;
}
.cards {
  display: flex;
  gap: 41px;
  margin-left: -10px;
  padding-bottom: 42px;
  background: #ebf1f5;
}
.card {
  flex: none;
  width: 641px;
  height: 930px;
  border: 1px solid #cfdfe9;
  background: #fff;
}
.full {
  width: auto;
  height: 200px;
  margin-left: -10px;
}
h3 {
  width: max-content;
  padding: 0 18px 0 14px;
  background: #29659c;
  color: #fff;
  font-size: 19px;
  line-height: 47px;
  font-weight: 700;
}
dl {
  display: grid;
  grid-template-columns: 235px 348px;
  grid-auto-rows: 59px 60px;
  padding: 28px 0 0 28px;
}
.offset {
  grid-auto-rows: 60px 59px;
  padding-top: 87px;
}
dt {
  font-size: 18px;
  line-height: 52px;
  color: #666;
}
dd {
  height: 52px;
  padding-left: 13px;
  background: #f7fafd;
  font-size: 19px;
  line-height: 52px;
  color: #000;
}
.fade {
  position: absolute;
  left: 0;
  right: 0;
  bottom: 0;
  height: 90px;
  background: linear-gradient(rgba(0, 0, 0, 0), rgba(0, 0, 0, 0.11));
  pointer-events: none;
}
</style>
